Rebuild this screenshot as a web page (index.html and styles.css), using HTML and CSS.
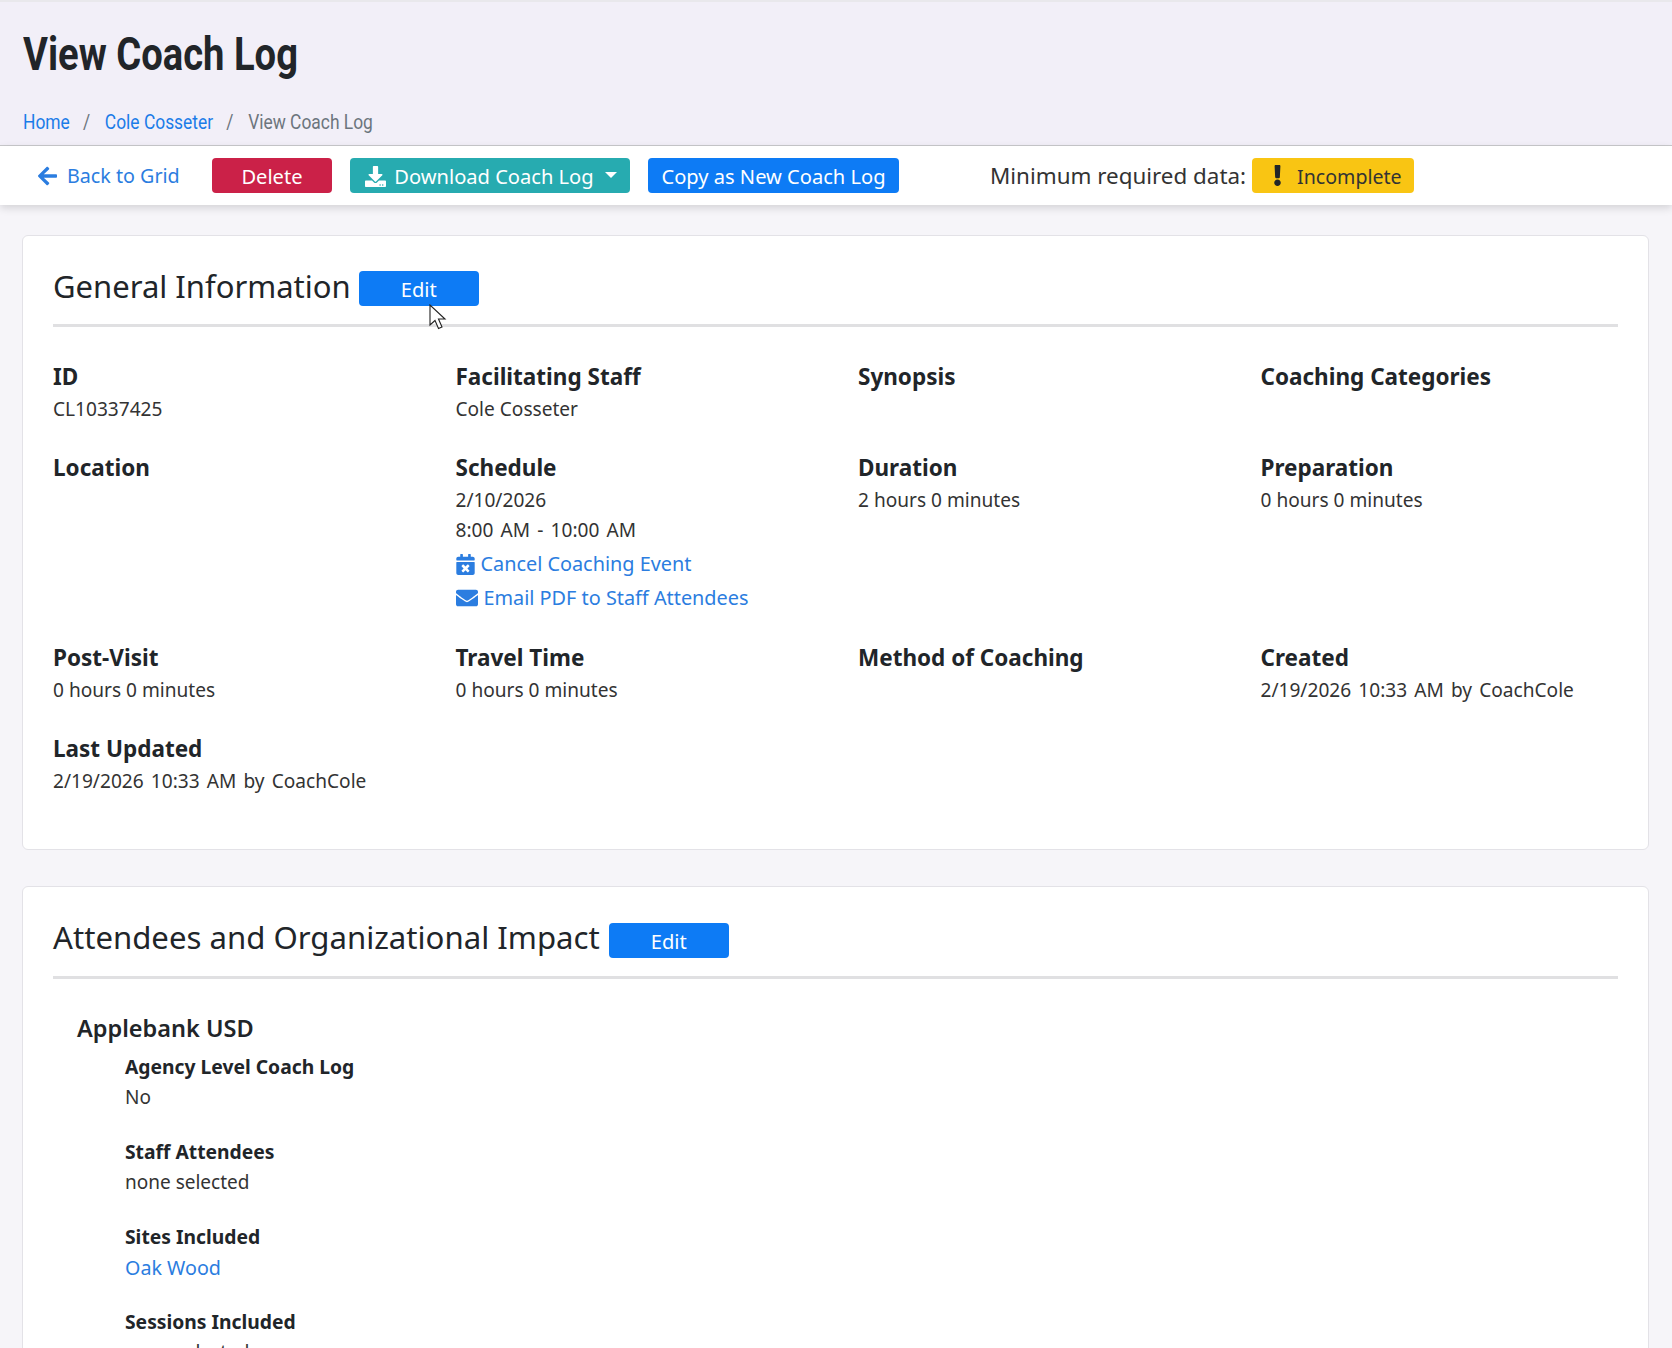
FILE: index.html
```html
<!DOCTYPE html>
<html lang="en">
<head>
<meta charset="utf-8">
<title>View Coach Log</title>
<link rel="stylesheet" href="styles.css">
</head>
<body>
<header class="page-head">
  <h1 class="page-title">View Coach Log</h1>
  <nav class="crumbs">
    <a href="#">Home</a><span class="sep">/</span><a href="#">Cole Cosseter</a><span class="sep">/</span><span class="cur">View Coach Log</span>
  </nav>
</header>
<div class="toolbar">
  <a class="back" href="#"><svg class="ic-back" viewBox="0 0 448 512"><path fill="currentColor" d="M257.5 445.1l-22.2 22.2c-9.4 9.4-24.6 9.4-33.9 0L7 273c-9.4-9.4-9.4-24.6 0-33.9L201.4 44.7c9.4-9.4 24.6-9.4 33.9 0l22.2 22.2c9.5 9.5 9.3 25-.4 34.3L136.6 216H424c13.3 0 24 10.7 24 24v32c0 13.3-10.7 24-24 24H136.6l120.5 114.8c9.8 9.3 10 24.8.4 34.3z"/></svg>Back to Grid</a>
  <button class="btn btn-red w120">Delete</button>
  <button class="btn btn-teal"><svg class="ic-dl" viewBox="0 0 512 512"><path fill="currentColor" d="M216 0h80c13.3 0 24 10.7 24 24v168h87.7c17.8 0 26.7 21.5 14.1 34.1L269.7 378.3c-7.5 7.5-19.8 7.5-27.3 0L90.1 226.1c-12.6-12.6-3.7-34.1 14.1-34.1H192V24c0-13.3 10.7-24 24-24zm296 376v112c0 13.3-10.7 24-24 24H24c-13.3 0-24-10.7-24-24V376c0-13.3 10.7-24 24-24h146.7l49 49c20.1 20.1 52.5 20.1 72.6 0l49-49H488c13.3 0 24 10.7 24 24zm-124 88c0-11-9-20-20-20s-20 9-20 20 9 20 20 20 20-9 20-20zm64 0c0-11-9-20-20-20s-20 9-20 20 9 20 20 20 20-9 20-20z"/></svg>Download Coach Log<span class="caret"></span></button>
  <button class="btn btn-blue">Copy as New Coach Log</button>
  <span class="min-label">Minimum required data:</span>
  <span class="badge"><svg class="ic-ex" viewBox="0 0 192 512"><path fill="currentColor" d="M176 432c0 44.112-35.888 80-80 80s-80-35.888-80-80 35.888-80 80-80 80 35.888 80 80zM25.26 25.199l13.6 272C39.499 309.972 50.041 320 62.83 320h66.34c12.789 0 23.331-10.028 23.97-22.801l13.6-272C167.425 11.49 156.496 0 142.77 0H49.23C35.504 0 24.575 11.49 25.26 25.199z"/></svg>Incomplete</span>
</div>
<main class="content">
  <section class="card card-general">
    <div class="card-head">
      <h2>General Information</h2>
      <span class="edit-wrap">
        <button class="btn btn-blue w120">Edit</button>
        <svg class="cursor" viewBox="0 0 18 26"><path d="M1 1v20l5-4.500 3.500 8 3.500-1.500-3.500-8h6.500z" fill="#fff" stroke="#222" stroke-width="1.100"/></svg>
      </span>
    </div>
    <div class="info-grid">
      <div class="field"><h3>ID</h3><p>CL10337425</p></div>
      <div class="field"><h3>Facilitating Staff</h3><p>Cole Cosseter</p></div>
      <div class="field"><h3>Synopsis</h3></div>
      <div class="field"><h3>Coaching Categories</h3></div>
      <div class="field"><h3>Location</h3></div>
      <div class="field">
        <h3>Schedule</h3>
        <p>2/10/2026</p>
        <p class="wide">8:00 AM - 10:00 AM</p>
        <a class="act" href="#"><svg class="ic-cal" viewBox="0 0 448 512"><path fill="currentColor" d="M436 160H12c-6.600 0-12-5.400-12-12v-36c0-26.500 21.500-48 48-48h48V12c0-6.600 5.400-12 12-12h40c6.600 0 12 5.400 12 12v52h128V12c0-6.600 5.400-12 12-12h40c6.600 0 12 5.400 12 12v52h48c26.500 0 48 21.500 48 48v36c0 6.600-5.400 12-12 12zM12 192h424c6.600 0 12 5.400 12 12v260c0 26.500-21.500 48-48 48H48c-26.500 0-48-21.500-48-48V204c0-6.600 5.400-12 12-12zm257.300 160l48.100-48.100c4.700-4.700 4.700-12.300 0-17l-28.300-28.300c-4.700-4.700-12.300-4.700-17 0L224 306.700l-48.100-48.100c-4.700-4.700-12.300-4.700-17 0l-28.300 28.300c-4.700 4.700-4.700 12.300 0 17l48.100 48.100-48.100 48.100c-4.700 4.700-4.700 12.300 0 17l28.300 28.300c4.700 4.700 12.300 4.700 17 0l48.100-48.100 48.100 48.100c4.700 4.700 12.300 4.700 17 0l28.300-28.300c4.700-4.700 4.700-12.300 0-17L269.300 352z"/></svg>Cancel Coaching Event</a>
        <a class="act" href="#"><svg class="ic-env" viewBox="0 0 512 512"><path fill="currentColor" d="M502.300 190.800c3.900-3.100 9.700-.2 9.700 4.700V400c0 26.500-21.500 48-48 48H48c-26.500 0-48-21.500-48-48V195.600c0-5 5.700-7.800 9.700-4.700 22.400 17.400 52.100 39.500 154.100 113.600 21.100 15.400 56.700 47.800 92.200 47.600 35.700.3 72-32.800 92.300-47.600 102-74.100 131.600-96.300 154-113.700zM256 320c23.200.4 56.600-29.200 73.400-41.400 132.700-96.300 142.800-104.700 173.400-128.700 5.800-4.500 9.200-11.500 9.200-18.900v-19c0-26.500-21.500-48-48-48H48C21.500 64 0 85.500 0 112v19c0 7.400 3.400 14.300 9.200 18.900 30.600 23.900 40.700 32.400 173.400 128.700 16.800 12.200 50.200 41.800 73.400 41.400z"/></svg>Email PDF to Staff Attendees</a>
      </div>
      <div class="field"><h3>Duration</h3><p>2 hours 0 minutes</p></div>
      <div class="field"><h3>Preparation</h3><p>0 hours 0 minutes</p></div>
      <div class="field"><h3>Post-Visit</h3><p>0 hours 0 minutes</p></div>
      <div class="field"><h3>Travel Time</h3><p>0 hours 0 minutes</p></div>
      <div class="field"><h3>Method of Coaching</h3></div>
      <div class="field"><h3>Created</h3><p class="wide">2/19/2026 10:33 AM by CoachCole</p></div>
      <div class="field"><h3>Last Updated</h3><p class="wide">2/19/2026 10:33 AM by CoachCole</p></div>
    </div>
  </section>
  <section class="card card-impact">
    <div class="card-head">
      <h2 class="h2-long">Attendees and Organizational Impact</h2>
      <button class="btn btn-blue w120">Edit</button>
    </div>
    <div class="agency">
      <h3 class="agency-name">Applebank USD</h3>
      <div class="sub"><h4>Agency Level Coach Log</h4><p>No</p></div>
      <div class="sub"><h4>Staff Attendees</h4><p>none selected</p></div>
      <div class="sub"><h4>Sites Included</h4><p class="link-line"><a href="#">Oak Wood</a></p></div>
      <div class="sub"><h4>Sessions Included</h4><p>none selected</p></div>
    </div>
  </section>
</main>
</body>
</html>
```

FILE: styles.css
```css
* { box-sizing: border-box; }
html, body { height: 100%; overflow: hidden; }
body {
  margin: 0;
  background: #f6f5f9;
  color: #212529;
  font-family: "Noto Sans", "Open Sans", sans-serif;
  font-size: 19px;
}
a { color: #2b7de0; text-decoration: none; }
h1, h2, h3, h4, p { margin: 0; }

.page-head {
  height: 146px;
  background: #f2eff8;
  border-top: 2px solid #e9e8ec;
  border-bottom: 1px solid #c9c9cc;
  padding: 23px 23px 0;
}
.page-title {
  font-family: Roboto, sans-serif;
  font-weight: 700;
  font-size: 46px;
  line-height: 58px;
  color: #212529;
  transform: scaleX(.83);
  transform-origin: left center;
  white-space: nowrap;
}
.crumbs {
  display: flex;
  margin-top: 25px;
  font-family: Roboto, sans-serif;
  font-size: 20px;
  line-height: 28px;
  transform: scaleX(.87);
  transform-origin: left center;
  white-space: nowrap;
}
.crumbs a { color: #1b7ce8; }
.crumbs .sep { color: #6c757d; margin: 0 17px 0 15px; }
.crumbs .cur { color: #6c757d; }

.toolbar {
  height: 59px;
  background: #fff;
  box-shadow: 0 3px 8px rgba(0, 0, 0, .14);
  display: flex;
  align-items: center;
  padding: 0 0 0 38px;
  position: relative;
}
.back { display: flex; align-items: center; color: #2b7de0; font-size: 19.700px; margin-right: 31px; width: 143px; white-space: nowrap; }
.ic-back { width: 19px; height: 22px; margin-right: 10px; flex: none; }
.btn {
  height: 35px;
  border: 0;
  border-radius: 4px;
  color: #fff;
  font-family: inherit;
  font-size: 20.100px;
  padding: 2px 13px 0;
  display: inline-flex;
  align-items: center;
  justify-content: center;
  white-space: nowrap;
}
.w120 { width: 120px; }
.btn-red { background: #cb2148; margin-right: 18px; }
.btn-teal { background: #27abb0; margin-right: 18px; width: 280px; }
.btn-blue { background: #0d7bf5; }
.ic-dl { width: 21px; height: 21px; margin-right: 9px; flex: none; margin: 0 8px 0 2px; }
.caret {
  margin-left: 11px;
  border-top: 6px solid #fff;
  border-left: 6px solid transparent;
  border-right: 6px solid transparent;
  margin-bottom: 3px;
}
.toolbar > .btn-blue { width: 251px; }
.min-label { margin-left: 91px; font-size: 22.400px; color: #333; white-space: nowrap; }
.badge {
  margin-left: 6px;
  height: 35px;
  width: 162px;
  background: #f9c513;
  border-radius: 4px;
  display: flex;
  align-items: center;
  font-size: 19.600px;
  color: #333;
  padding: 2px 0 0 15px;
  white-space: nowrap;
}
.ic-ex { width: 21px; height: 21px; margin-right: 9px; color: #212529; flex: none; margin-top: -2px; }

.content { padding: 30px 23px 0 22px; }
.card {
  background: #fff;
  border: 1px solid #e3e2e7;
  border-radius: 6px;
  padding: 34px 30px 0;
  margin-bottom: 36px;
}
.card-general { height: 615px; }
.card-head {
  display: flex;
  align-items: flex-start;
  gap: 8px;
  height: 57px;
  border-bottom: 3px solid #e0e0e2;
}
.card-impact .card-head { height: 58px; gap: 9px; }
.card-head h2 {
  font-weight: 400;
  font-size: 31px;
  line-height: 34px;
  margin-top: -1px;
  color: #212529;
  white-space: nowrap;
}
.card-head .h2-long { font-size: 31.150px; }
.card-head .btn { height: 35px; margin-top: 1px; }
.card-impact .card-head .btn { margin-top: 2px; }
.edit-wrap { position: relative; display: inline-flex; }
.cursor { position: absolute; left: 70px; top: 34px; width: 18px; height: 26px; }

.info-grid {
  display: grid;
  grid-template-columns: repeat(4, 1fr);
  column-gap: 45px;
  row-gap: 29px;
  padding-top: 35px;
}
.field h3 { font-size: 22.500px; line-height: 30px; font-weight: 700; color: #212529; margin-bottom: 2px; }
.field p { font-size: 19.100px; line-height: 30px; color: #333; }
.field p.wide { word-spacing: 2.200px; }
.act { display: flex; align-items: center; font-size: 19.850px; line-height: 34px; white-space: nowrap; }
p + .act { margin-top: 2px; }
.act + .act { margin-bottom: -1px; }
.ic-cal { width: 19px; height: 21px; margin-right: 6px; flex: none; }
.ic-env { width: 22px; height: 22px; margin-right: 6px; flex: none; }

.agency { padding: 32px 0 0 24px; }
.agency-name { font-size: 23.500px; line-height: 34px; font-weight: 600; color: #212529; margin-bottom: 8px; }
.sub { padding-left: 48px; margin-bottom: 25px; }
.sub h4 { font-size: 19.300px; line-height: 28px; font-weight: 700; color: #212529; }
.sub p { font-size: 19px; line-height: 32px; color: #333; }
.sub p.link-line { padding-top: 1px; margin-bottom: -1px; }
.sub a { color: #2b7de0; font-size: 19.700px; }
```
